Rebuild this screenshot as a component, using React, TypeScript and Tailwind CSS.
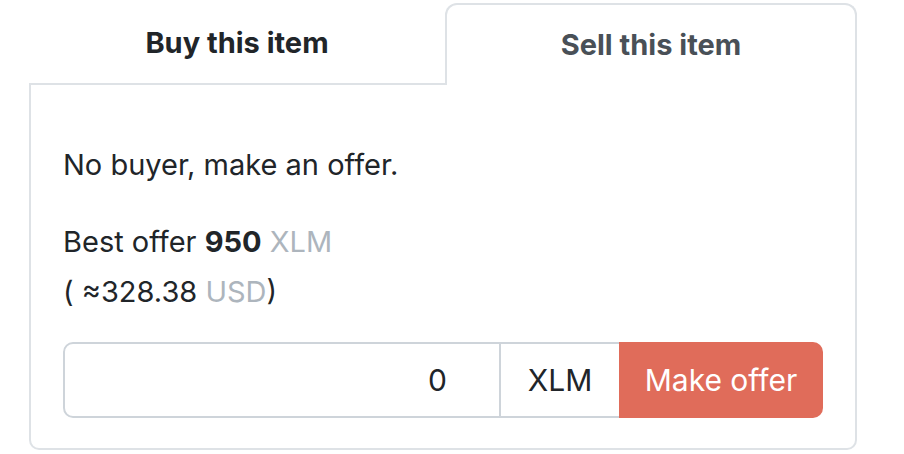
export default function App() {
  return (
    <div className="min-h-screen bg-white pt-[3px] font-['Inter',sans-serif] text-[#212529]">
      <div className="ml-[29px] w-[828px]">
        <div className="flex h-[82px]">
          <button className="flex w-[416px] items-center justify-center border-b-2 border-[#dee2e6] text-[29px] font-bold">
            Buy this item
          </button>
          <button className="flex flex-1 items-center justify-center rounded-t-[12px] border-2 border-b-0 border-[#dee2e6] text-[29px] font-bold text-[#495057]">
            Sell this item
          </button>
        </div>
        <div className="rounded-b-[10px] border-2 border-t-0 border-[#dee2e6] px-[32px] pt-[60px] pb-[30px] text-[29px]">
          <p className="leading-[40px]">No buyer, make an offer.</p>
          <div className="mt-[32px] leading-[50px]">
            <p>
              Best offer <span className="font-bold">950</span>{' '}
              <span className="text-[#adb5bd]">XLM</span>
            </p>
            <p>
              ( ≈328.38 <span className="text-[#adb5bd]">USD</span>)
            </p>
          </div>
          <div className="mt-[25px] flex h-[76px] text-[30px]">
            <input
              readOnly
              value="0"
              className="w-[438px] rounded-l-[10px] border-2 border-[#ced4da] pr-[52px] text-right text-[30px] text-[#212529] outline-none"
            />
            <span className="flex w-[118px] items-center justify-center border-y-2 border-[#ced4da]">
              XLM
            </span>
            <button className="flex flex-1 items-center justify-center rounded-r-[10px] bg-[#e06c5a] text-white">
              Make offer
            </button>
          </div>
        </div>
      </div>
    </div>
  );
}
